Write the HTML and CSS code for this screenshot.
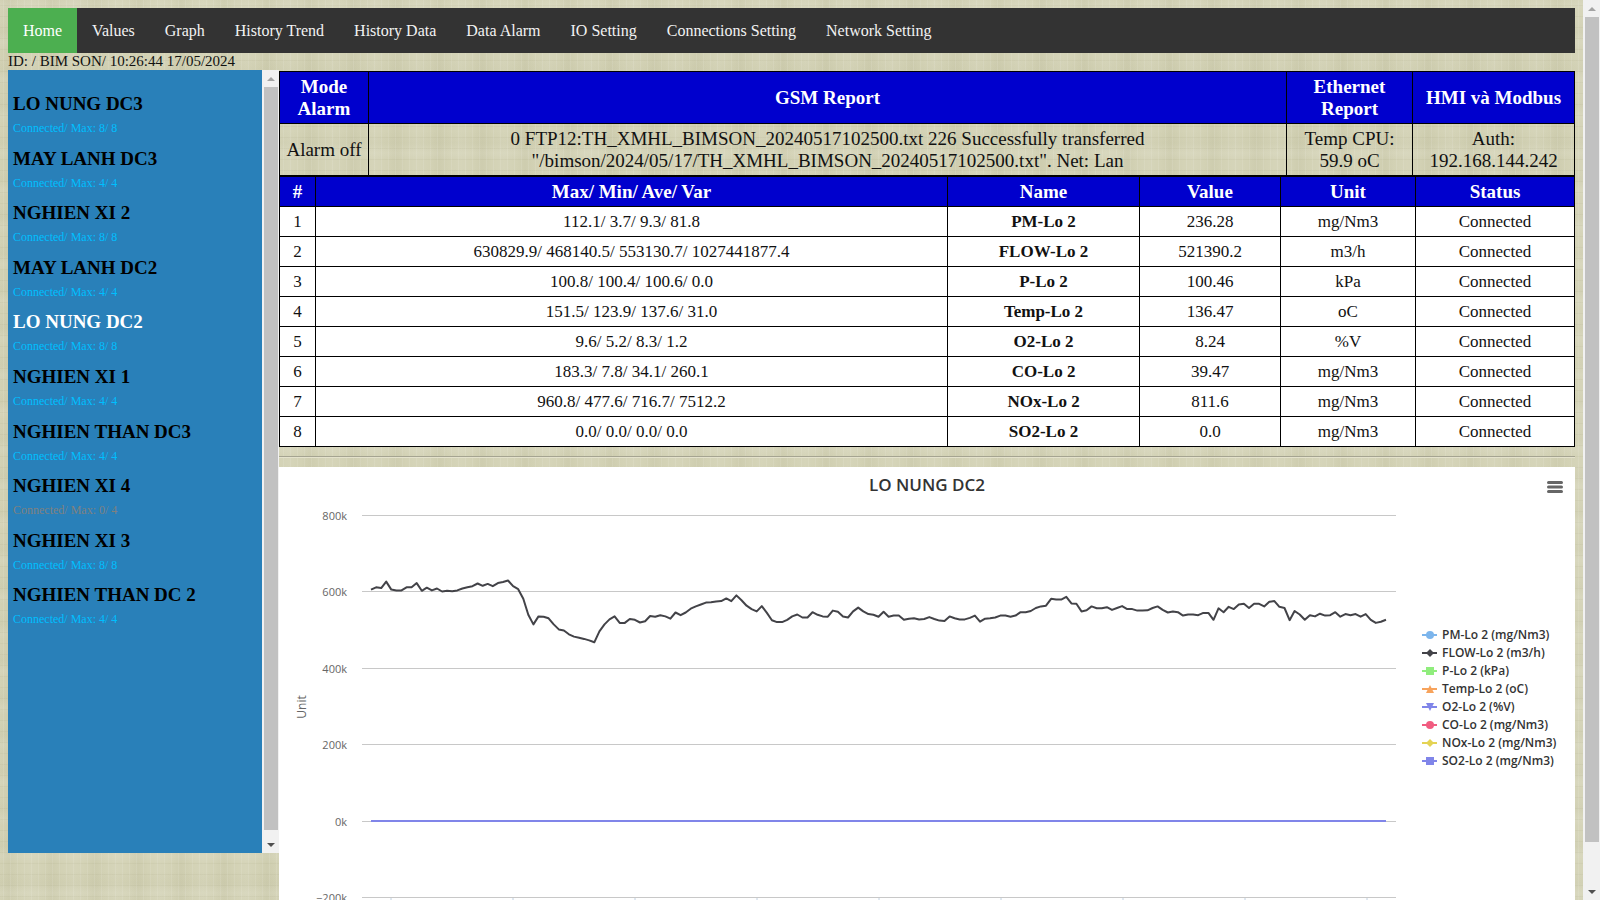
FILE: index.html
```html
<!DOCTYPE html>
<html lang="en">
<head>
  <meta charset="UTF-8">
  <title>BIM SON - Home</title>
  <link rel="stylesheet" href="styles.css">
</head>
<body>
  <div class="page">
    <nav class="topnav">
      <a class="active" href="#home">Home</a>
      <a href="#values">Values</a>
      <a href="#graph">Graph</a>
      <a href="#trend">History Trend</a>
      <a href="#history">History Data</a>
      <a href="#alarm">Data Alarm</a>
      <a href="#io">IO Setting</a>
      <a href="#connections">Connections Setting</a>
      <a href="#network">Network Setting</a>
    </nav>
    <div class="station">ID: / BIM SON/ 10:26:44 17/05/2024</div>

    <div class="content">
      <div class="sidebar">
        <div class="devices">
          <a href="#d1"><b>LO NUNG DC3</b><small>Connected/ Max: 8/ 8</small></a>
          <a href="#d2"><b>MAY LANH DC3</b><small>Connected/ Max: 4/ 4</small></a>
          <a href="#d3"><b>NGHIEN XI 2</b><small>Connected/ Max: 8/ 8</small></a>
          <a href="#d4"><b>MAY LANH DC2</b><small>Connected/ Max: 4/ 4</small></a>
          <a href="#d5" class="selected"><b>LO NUNG DC2</b><small>Connected/ Max: 8/ 8</small></a>
          <a href="#d6"><b>NGHIEN XI 1</b><small>Connected/ Max: 4/ 4</small></a>
          <a href="#d7"><b>NGHIEN THAN DC3</b><small>Connected/ Max: 4/ 4</small></a>
          <a href="#d8" class="offline"><b>NGHIEN XI 4</b><small>Connected/ Max: 0/ 4</small></a>
          <a href="#d9"><b>NGHIEN XI 3</b><small>Connected/ Max: 8/ 8</small></a>
          <a href="#d10"><b>NGHIEN THAN DC 2</b><small>Connected/ Max: 4/ 4</small></a>
        </div>
        <div class="scrollbar">
          <i class="arrow up"></i>
          <i class="thumb"></i>
          <i class="arrow down"></i>
        </div>
      </div>

      <div class="main">
        <table class="report">
          <colgroup><col class="c-mode"><col><col class="c-eth"><col class="c-hmi"></colgroup>
          <tr><th>Mode Alarm</th><th>GSM Report</th><th>Ethernet Report</th><th>HMI và Modbus</th></tr>
          <tr>
            <td>Alarm off</td>
            <td>0 FTP12:TH_XMHL_BIMSON_20240517102500.txt 226 Successfully transferred<br>"/bimson/2024/05/17/TH_XMHL_BIMSON_20240517102500.txt". Net: Lan</td>
            <td>Temp CPU:<br>59.9 oC</td>
            <td>Auth:<br>192.168.144.242</td>
          </tr>
        </table>
        <table class="values">
          <colgroup><col class="c-no"><col><col class="c-name"><col class="c-value"><col class="c-unit"><col class="c-status"></colgroup>
          <tr><th>#</th><th>Max/ Min/ Ave/ Var</th><th>Name</th><th>Value</th><th>Unit</th><th>Status</th></tr>
          <tr><td>1</td><td>112.1/ 3.7/ 9.3/ 81.8</td><td><b>PM-Lo 2</b></td><td>236.28</td><td>mg/Nm3</td><td>Connected</td></tr>
          <tr><td>2</td><td>630829.9/ 468140.5/ 553130.7/ 1027441877.4</td><td><b>FLOW-Lo 2</b></td><td>521390.2</td><td>m3/h</td><td>Connected</td></tr>
          <tr><td>3</td><td>100.8/ 100.4/ 100.6/ 0.0</td><td><b>P-Lo 2</b></td><td>100.46</td><td>kPa</td><td>Connected</td></tr>
          <tr><td>4</td><td>151.5/ 123.9/ 137.6/ 31.0</td><td><b>Temp-Lo 2</b></td><td>136.47</td><td>oC</td><td>Connected</td></tr>
          <tr><td>5</td><td>9.6/ 5.2/ 8.3/ 1.2</td><td><b>O2-Lo 2</b></td><td>8.24</td><td>%V</td><td>Connected</td></tr>
          <tr><td>6</td><td>183.3/ 7.8/ 34.1/ 260.1</td><td><b>CO-Lo 2</b></td><td>39.47</td><td>mg/Nm3</td><td>Connected</td></tr>
          <tr><td>7</td><td>960.8/ 477.6/ 716.7/ 7512.2</td><td><b>NOx-Lo 2</b></td><td>811.6</td><td>mg/Nm3</td><td>Connected</td></tr>
          <tr><td>8</td><td>0.0/ 0.0/ 0.0/ 0.0</td><td><b>SO2-Lo 2</b></td><td>0.0</td><td>mg/Nm3</td><td>Connected</td></tr>
        </table>
        <hr>
        <div class="chart">
          <svg id="chart" viewBox="0 0 1296 480">
            <text class="title" x="648" y="24">LO NUNG DC2</text>
            <text class="axis-title" transform="translate(27 240) rotate(-90)">Unit</text>
            <g id="grid"></g>
            <path class="tick" d="M112 431v10M234 431v10M356 431v10M478 431v10M600 431v10M722 431v10M844 431v10M966 431v10M1088 431v10"/>
            <path id="flow" class="flow"/>
            <path class="zero" d="M92 354H1107"/>
            <g id="legend"></g>
          </svg>
          <button class="menu" aria-label="Chart context menu">
            <svg viewBox="0 0 16 14"><path d="M1.5 2.5h13M1.5 7h13M1.5 11.5h13"/></svg>
          </button>
        </div>
      </div>
    </div>
  </div>
  <div class="scrollbar page-scroll">
    <i class="arrow up"></i>
    <i class="thumb"></i>
    <i class="arrow down"></i>
  </div>
  <script src="chart.js"></script>
</body>
</html>
```
FILE: styles.css
```css
* {
  box-sizing: border-box;
}
body {
  margin: 0;
  height: 100vh;
  display: flex;
  overflow: hidden;
  font-family: "Liberation Serif", "Times New Roman", serif;
  font-size: 16px;
  color: #111;
  background-color: #d3d2b5;
  background-image:
    repeating-linear-gradient(90deg, #fff0 0 3px, #ffffff18 3px 4px, #fff0 4px 7px),
    repeating-linear-gradient(0deg, #fff0 0 3px, #8a876012 3px 4px, #fff0 4px 11px),
    repeating-linear-gradient(90deg, #8a876000 0, #8a876012 9px, #8a876000 19px, #ffffff10 31px, #8a876000 43px),
    repeating-linear-gradient(0deg, #ffffff00 0, #ffffff14 7px, #8a87600c 17px, #ffffff00 29px, #ffffff00 37px);
}
a {
  text-decoration: none;
}
.page {
  flex: 1;
  min-width: 0;
  padding: 8px;
}
.topnav {
  display: flex;
  background: #333;
}
.topnav a {
  padding: 14px 15px;
  line-height: 17px;
  color: #f2f2f2;
}
.topnav a.active {
  background: #4caf50;
  color: #fff;
}
.station {
  font-size: 15px;
  line-height: 17px;
}
.content {
  display: flex;
  align-items: flex-start;
}

/* device list */
.sidebar {
  flex: none;
  display: flex;
  width: 271px;
  height: 87vh;
  background: #2980b9;
}
.devices {
  flex: 1;
  display: grid;
  grid-auto-rows: 1fr;
  height: 546px;
  margin-top: 22px;
  padding-left: 5px;
}
.devices b {
  display: block;
  font-size: 19px;
  line-height: 24px;
  color: #000;
}
.devices small {
  display: block;
  font-size: 12px;
  line-height: 24px;
  color: #00bfff;
}
.devices .selected b {
  color: #fff;
}
.devices .offline small {
  color: #808080;
}

.scrollbar {
  display: flex;
  flex-direction: column;
  align-items: center;
  width: 17px;
  background: #f1f1f1;
}
.arrow {
  flex: none;
  width: 17px;
  height: 17px;
  display: grid;
  place-items: center;
}
.arrow::before {
  content: "";
  border: 4px solid transparent;
}
.up::before {
  border-top: 0;
  border-bottom-color: #a3a3a3;
}
.down::before {
  border-bottom: 0;
  border-top-color: #505050;
}
.thumb {
  width: 14px;
  height: 743px;
  background: #c1c1c1;
}
.page-scroll .thumb {
  height: 825px;
}
.scrollbar .down {
  margin-top: auto;
}

/* tables */
.main {
  flex: 1;
  min-width: 0;
  padding-top: 1px;
}
table {
  width: 100%;
  table-layout: fixed;
  border-collapse: collapse;
  text-align: center;
}
th, td {
  padding: 0 5px;
  border: 1px solid #000;
}
th {
  background: #0000cd;
  color: #fff;
  font-size: 19px;
}
.report tr {
  height: 52px;
}
.report th, .report td {
  font-size: 19px;
  line-height: 22px;
}
.c-mode { width: 89px; }
.c-eth { width: 126px; }
.c-hmi { width: 162px; }
.values tr {
  height: 30px;
}
.values td {
  background: #fff;
  font-size: 17px;
}
.c-no { width: 36px; }
.c-name { width: 192px; }
.c-value { width: 141px; }
.c-unit { width: 135px; }
.c-status { width: 159px; }
hr {
  margin: 9px 0;
  border: 0;
  border-top: 1px solid #a5a491;
  border-bottom: 1px solid #e4e2cc;
}

/* chart */
.chart {
  position: relative;
  background: #fff;
  font-family: "Open Sans", "Noto Sans", sans-serif;
}
.chart svg {
  display: block;
  width: 100%;
}
.title {
  font-size: 17px;
  font-weight: 600;
  fill: #333;
  text-anchor: middle;
}
.axis-title {
  font-size: 12px;
  fill: #666;
  text-anchor: middle;
}
.label {
  font-size: 11px;
  fill: #666;
  text-anchor: end;
}
.grid-line {
  stroke: #c8c8c8;
}
.tick {
  stroke: #c0d0e0;
}
.flow, .zero {
  fill: none;
  stroke: #434348;
  stroke-width: 2;
  stroke-linejoin: round;
}
.zero {
  stroke: #8085e9;
}
.legend-text {
  font-size: 12px;
  font-weight: 600;
  fill: #333;
}
.chart .menu {
  position: absolute;
  top: 13px;
  right: 12px;
  width: 16px;
  height: 14px;
  padding: 0;
  border: 0;
  background: none;
}
.menu path {
  stroke: #666;
  stroke-width: 3;
  stroke-linecap: round;
}
```
FILE: chart.js
```js
// flow rate, thousand m3/h
const flow = [
  607, 613, 611, 628, 607, 605, 605, 613, 613, 624, 604, 612, 605, 610, 602, 604, 603, 605, 610, 613,
  616, 623, 617, 622, 616, 624, 627, 631, 616, 608, 583, 541, 516, 537, 536, 532, 516, 503, 500, 490,
  484, 481, 478, 474, 469, 498, 516, 529, 537, 520, 520, 530, 528, 521, 524, 538, 536, 540, 537, 531,
  547, 540, 547, 557, 563, 568, 573, 574, 576, 577, 584, 577, 592, 579, 565, 556, 550, 564, 546, 527,
  522, 522, 528, 537, 542, 534, 534, 548, 541, 537, 536, 552, 549, 537, 534, 550, 560, 550, 543, 541,
  536, 549, 536, 539, 539, 528, 531, 532, 529, 530, 535, 530, 526, 525, 537, 532, 529, 529, 533, 539,
  523, 531, 532, 534, 539, 539, 536, 539, 548, 548, 551, 559, 563, 565, 583, 581, 581, 588, 571, 570,
  550, 553, 563, 558, 558, 561, 554, 559, 564, 556, 556, 552, 552, 553, 559, 563, 554, 547, 550, 548,
  539, 542, 542, 540, 546, 546, 528, 558, 548, 562, 556, 568, 570, 559, 570, 570, 563, 575, 577, 562,
  559, 527, 551, 542, 528, 540, 537, 544, 539, 540, 548, 536, 543, 540, 543, 536, 543, 528, 520, 523,
  528
];

const series = [
  ['PM-Lo 2 (mg/Nm3)', '#7cb5ec', 'circle'],
  ['FLOW-Lo 2 (m3/h)', '#434348', 'diamond'],
  ['P-Lo 2 (kPa)', '#90ed7d', 'square'],
  ['Temp-Lo 2 (oC)', '#f7a35c', 'triangle'],
  ['O2-Lo 2 (%V)', '#8085e9', 'triangleDown'],
  ['CO-Lo 2 (mg/Nm3)', '#f15c80', 'circle'],
  ['NOx-Lo 2 (mg/Nm3)', '#e4d354', 'diamond'],
  ['SO2-Lo 2 (mg/Nm3)', '#8085e9', 'square']
];

const markers = {
  circle: 'M-4 0a4 4 0 1 0 8 0a4 4 0 1 0 -8 0',
  diamond: 'M0 -4L4 0L0 4L-4 0Z',
  square: 'M-4 -4H4V4H-4Z',
  triangle: 'M0 -4L4 4H-4Z',
  triangleDown: 'M-4 -4H4L0 4Z'
};

const LEFT = 92;
const RIGHT = 1107;
const yOf = k => 354.5 - k * 76.4 / 200;

let grid = '';
for (let k = 800; k >= -200; k -= 200) {
  const y = Math.round(yOf(k));
  grid += `<path class="grid-line" d="M83 ${y - 0.5}H1117"/><text class="label" x="68" y="${y + 4}">${String(k).replace('-', '−')}k</text>`;
}
document.getElementById('grid').innerHTML = grid;

const step = (RIGHT - LEFT) / (flow.length - 1);
document.getElementById('flow').setAttribute('d',
  'M' + flow.map((v, i) => `${(LEFT + i * step).toFixed(1)} ${yOf(v).toFixed(1)}`).join('L'));

document.getElementById('legend').innerHTML = series.map(([name, color, shape], i) =>
  `<g transform="translate(1143 ${168 + i * 18})">
    <path d="M0 0H15" stroke="${color}" stroke-width="2"/>
    <path d="${markers[shape]}" transform="translate(8 0)" fill="${color}"/>
    <text class="legend-text" x="20" y="4">${name}</text>
  </g>`).join('');
```
